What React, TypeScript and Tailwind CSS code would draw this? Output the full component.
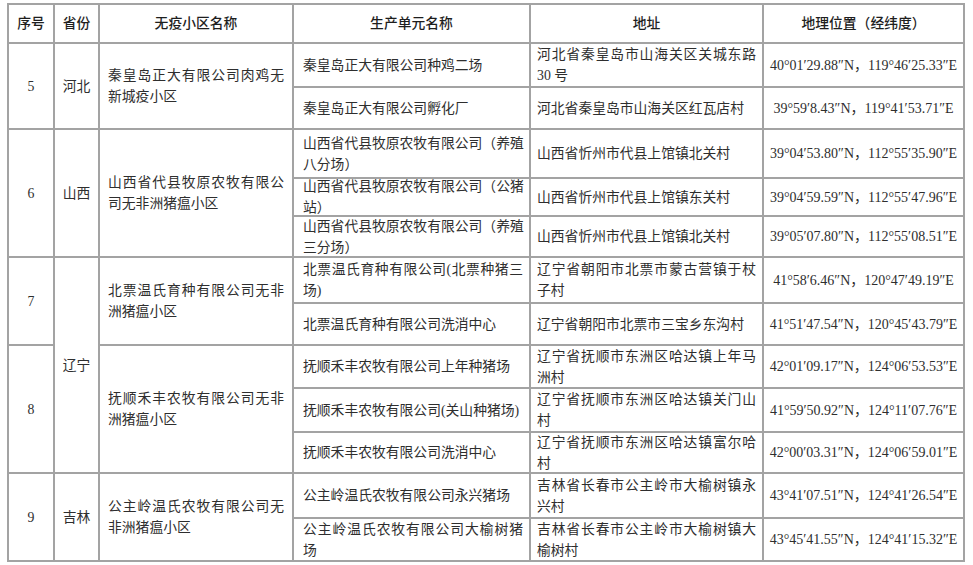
import React from "react";

type Sub = { prod: string[]; addr: string[]; coord: string };
type Group = { no: string; prov?: string; provSpan?: number; name: string[]; subs: Sub[] };

const groups: Group[] = [
  {
    no: "5",
    prov: "河北",
    provSpan: 2,
    name: ["秦皇岛正大有限公司肉鸡无", "新城疫小区"],
    subs: [
      { prod: ["秦皇岛正大有限公司种鸡二场"], addr: ["河北省秦皇岛市山海关区关城东路", "30 号"], coord: "40°01′29.88″N，119°46′25.33″E" },
      { prod: ["秦皇岛正大有限公司孵化厂"], addr: ["河北省秦皇岛市山海关区红瓦店村"], coord: "39°59′8.43″N，119°41′53.71″E" },
    ],
  },
  {
    no: "6",
    prov: "山西",
    provSpan: 3,
    name: ["山西省代县牧原农牧有限公", "司无非洲猪瘟小区"],
    subs: [
      { prod: ["山西省代县牧原农牧有限公司（养殖", "八分场）"], addr: ["山西省忻州市代县上馆镇北关村"], coord: "39°04′53.80″N，112°55′35.90″E" },
      { prod: ["山西省代县牧原农牧有限公司（公猪", "站）"], addr: ["山西省忻州市代县上馆镇东关村"], coord: "39°04′59.59″N，112°55′47.96″E" },
      { prod: ["山西省代县牧原农牧有限公司（养殖", "三分场）"], addr: ["山西省忻州市代县上馆镇北关村"], coord: "39°05′07.80″N，112°55′08.51″E" },
    ],
  },
  {
    no: "7",
    prov: "辽宁",
    provSpan: 5,
    name: ["北票温氏育种有限公司无非", "洲猪瘟小区"],
    subs: [
      { prod: ["北票温氏育种有限公司(北票种猪三", "场)"], addr: ["辽宁省朝阳市北票市蒙古营镇于杖", "子村"], coord: "41°58′6.46″N，120°47′49.19″E" },
      { prod: ["北票温氏育种有限公司洗消中心"], addr: ["辽宁省朝阳市北票市三宝乡东沟村"], coord: "41°51′47.54″N，120°45′43.79″E" },
    ],
  },
  {
    no: "8",
    name: ["抚顺禾丰农牧有限公司无非", "洲猪瘟小区"],
    subs: [
      { prod: ["抚顺禾丰农牧有限公司上年种猪场"], addr: ["辽宁省抚顺市东洲区哈达镇上年马", "洲村"], coord: "42°01′09.17″N，124°06′53.53″E" },
      { prod: ["抚顺禾丰农牧有限公司(关山种猪场)"], addr: ["辽宁省抚顺市东洲区哈达镇关门山", "村"], coord: "41°59′50.92″N，124°11′07.76″E" },
      { prod: ["抚顺禾丰农牧有限公司洗消中心"], addr: ["辽宁省抚顺市东洲区哈达镇富尔哈", "村"], coord: "42°00′03.31″N，124°06′59.01″E" },
    ],
  },
  {
    no: "9",
    prov: "吉林",
    provSpan: 2,
    name: ["公主岭温氏农牧有限公司无", "非洲猪瘟小区"],
    subs: [
      { prod: ["公主岭温氏农牧有限公司永兴猪场"], addr: ["吉林省长春市公主岭市大榆树镇永", "兴村"], coord: "43°41′07.51″N，124°41′26.54″E" },
      { prod: ["公主岭温氏农牧有限公司大榆树猪", "场"], addr: ["吉林省长春市公主岭市大榆树镇大", "榆树村"], coord: "43°45′41.55″N，124°41′15.32″E" },
    ],
  },
];

const cellBase = "border-r-2 border-b-2 border-[#a3a3a3] flex items-center overflow-visible min-w-0";

const spanClass: Record<number, string> = {
  1: "row-span-1",
  2: "row-span-2",
  3: "row-span-3",
  5: "row-span-5",
};

function Lines({ lines }: { lines: string[] }) {
  return (
    <div className="w-full flex flex-col">
      {lines.map((l, i) => (
        <div
          key={i}
          className={
            i < lines.length - 1
              ? "whitespace-nowrap text-justify [text-align-last:justify]"
              : "whitespace-nowrap text-left"
          }
        >
          {l}
        </div>
      ))}
    </div>
  );
}

export default function App() {
  const cells: React.ReactNode[] = [];
  const headers = ["序号", "省份", "无疫小区名称", "生产单元名称", "地址", "地理位置（经纬度）"];
  headers.forEach((h, i) => {
    cells.push(
      <div key={"h" + i} className={cellBase + " justify-center font-medium text-[#1e1e1e]"}>
        {h}
      </div>
    );
  });

  groups.forEach((g, gi) => {
    const n = g.subs.length;
    g.subs.forEach((s, si) => {
      if (si === 0) {
        cells.push(
          <div key={`no${gi}`} className={cellBase + " justify-center " + spanClass[n]}>
            {g.no}
          </div>
        );
        if (g.prov) {
          cells.push(
            <div key={`pv${gi}`} className={cellBase + " justify-center " + spanClass[g.provSpan || n]}>
              {g.prov}
            </div>
          );
        }
        cells.push(
          <div key={`nm${gi}`} className={cellBase + " px-2 " + spanClass[n]}>
            <Lines lines={g.name} />
          </div>
        );
      }
      cells.push(
        <div key={`pr${gi}-${si}`} className={cellBase + " pl-[9px] pr-[6px]"}>
          <Lines lines={s.prod} />
        </div>
      );
      cells.push(
        <div key={`ad${gi}-${si}`} className={cellBase + " pl-[6px] pr-[6px]"}>
          <Lines lines={s.addr} />
        </div>
      );
      cells.push(
        <div key={`co${gi}-${si}`} className={cellBase + " justify-center whitespace-nowrap text-[14px]"}>
          {s.coord}
        </div>
      );
    });
  });

  return (
    <div className="w-[973px] h-[565px] bg-white overflow-hidden pt-[3px] pl-[7px]">
      <div className="grid w-fit grid-cols-[46px_45px_194px_237px_233px_201px] grid-rows-[39px_44px_42px_49px_38px_41px_46px_42px_43px_44px_41px_45px_43px] border-l-2 border-t-2 border-[#a3a3a3] text-[13.8px] leading-[21px] text-[#2e2e2e] font-['Liberation_Serif','Noto_Sans_CJK_SC',serif]">
        {cells}
      </div>
    </div>
  );
}
